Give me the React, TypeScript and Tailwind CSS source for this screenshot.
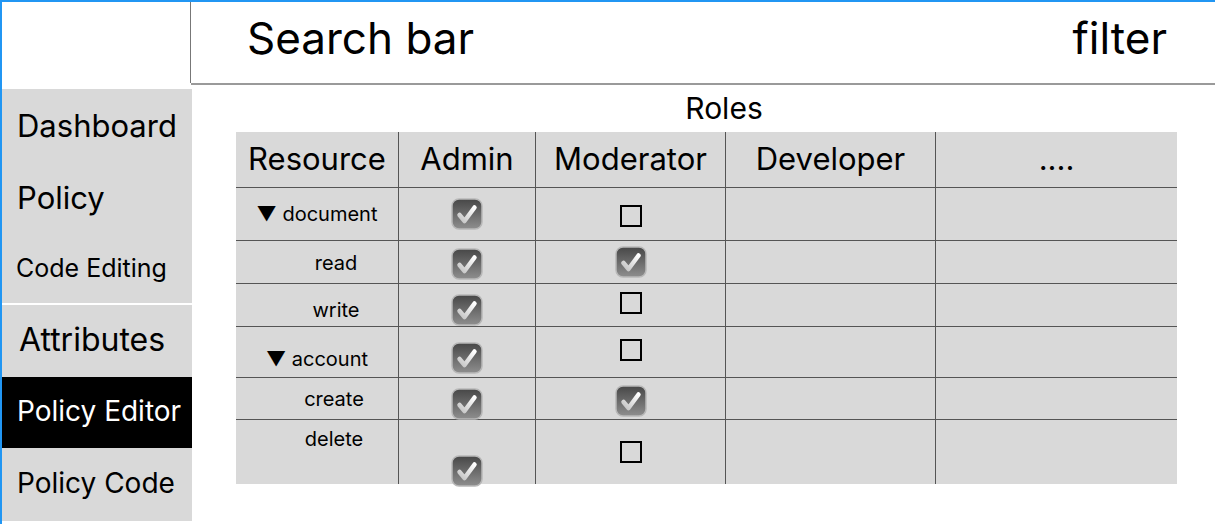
import React from 'react';

const CheckedBox = () => (
  <svg width="32" height="32" viewBox="0 0 32 32">
    <defs>
      <linearGradient id="cb-bg" x1="0" y1="0" x2="0" y2="1">
        <stop offset="0" stopColor="#474747" />
        <stop offset="1" stopColor="#8e8e8e" />
      </linearGradient>
      <linearGradient id="cb-tick" x1="1" y1="0" x2="0" y2="1">
        <stop offset="0" stopColor="#ffffff" />
        <stop offset="1" stopColor="#c4c4c4" />
      </linearGradient>
    </defs>
    <rect x="1" y="1" width="30" height="30" rx="7" fill="url(#cb-bg)" stroke="#b8b8b8" strokeWidth="1.5" />
    <path d="M8.5 17 L13.5 23 L23.5 9.5" fill="none" stroke="url(#cb-tick)" strokeWidth="4.5" strokeLinecap="round" strokeLinejoin="round" />
  </svg>
);

const EmptyBox = () => <div className="w-[22px] h-[22px] border-2 border-black"></div>;

const App = () => {
  // label / admin / moderator cells, with per-cell nudges to match the sketch
  const rows = [
    { h: 'h-[53px]', label: '▼ document', labelCls: 'items-center pt-0', adminCls: 'items-center pt-0', mod: 'empty', modCls: 'pt-[4px]' },
    { h: 'h-[43px]', label: 'read', labelCls: 'items-center pl-[38px] pt-[1px]', adminCls: 'items-center pt-[3px]', mod: 'checked', modCls: 'pb-[1px]' },
    { h: 'h-[43px]', label: 'write', labelCls: 'items-center pl-[38px] pt-[10px]', adminCls: 'items-center pt-[10px]', mod: 'empty', modCls: 'pb-[4px]' },
    { h: 'h-[51px]', label: '▼ account', labelCls: 'items-center pt-[14px]', adminCls: 'items-center pt-[12px]', mod: 'empty', modCls: 'pb-[4px]' },
    { h: 'h-[42px]', label: 'create', labelCls: 'items-center pl-[34px]', adminCls: 'items-center pt-[10px]', mod: 'checked', modCls: 'pt-[4px]' },
    { h: 'h-[65px]', label: 'delete', labelCls: 'items-center pl-[34px] pb-[26px]', adminCls: 'items-end', mod: 'empty', modCls: 'pt-0' },
  ];

  const headers = ['Resource', 'Admin', 'Moderator', 'Developer', '....'];

  return (
    <div className="w-full h-[524px] overflow-hidden bg-white border-t-2 border-l-2 border-[#2196f3] font-['Inter',sans-serif] text-black">
      <header className="flex">
        <div className="w-[189px] h-[81px] border-r border-[#777]"></div>
        <div className="flex-1 h-[83px] border-b-2 border-[#9a9a9a] flex items-center justify-between pl-[56px] pr-[48px] pb-[10px]">
          <span className="text-[44px]">Search bar</span>
          <span className="text-[44px]">filter</span>
        </div>
      </header>

      <div className="flex mt-[4px]">
        <aside className="w-[190px] flex flex-col">
          <div className="bg-[#d9d9d9] flex flex-col">
            <div className="h-[76px] flex items-center pl-[15px] pb-[2px] text-[31px]">Dashboard</div>
            <div className="h-[72px] flex items-center pl-[15px] pb-[6px] text-[31px]">Policy</div>
            <div className="h-[66px] flex items-center pl-[14px] pb-[2px] text-[25px]">Code Editing</div>
          </div>
          <div className="h-[72px] mt-[2px] bg-[#d9d9d9] flex items-center pl-[17px] pb-[2px] text-[32px]">Attributes</div>
          <div className="h-[71px] bg-black text-white flex items-center pl-[15px] pb-[4px] text-[28px]">Policy Editor</div>
          <div className="h-[73px] bg-[#d9d9d9] flex items-center pl-[15px] pb-[4px] text-[28px]">Policy Code</div>
        </aside>

        <main className="flex-1">
          <div className="h-[43px] flex items-center justify-center pl-[41px] pb-[4px] text-[30px]">Roles</div>
          <div className="ml-[44px] w-[941px] bg-[#d9d9d9]">
            <div className="grid grid-cols-[162px_137px_190px_210px_242px] h-[55px]">
              {headers.map((h, i) => (
                <div
                  key={h}
                  className={`flex items-center justify-center text-[31px] pb-[1px] ${i > 0 ? 'border-l border-[#555]' : ''}`}
                >
                  {h}
                </div>
              ))}
            </div>
            {rows.map((r) => (
              <div key={r.label} className={`grid grid-cols-[162px_137px_190px_210px_242px] border-t border-[#555] ${r.h}`}>
                <div className={`flex justify-center text-[20px] ${r.labelCls}`}>{r.label}</div>
                <div className={`flex justify-center border-l border-[#555] ${r.adminCls}`}>
                  <div className={r.label === 'delete' ? '-mb-[3px]' : ''}>
                    <CheckedBox />
                  </div>
                </div>
                <div className={`flex items-center justify-center border-l border-[#555] ${r.modCls}`}>
                  {r.mod === 'checked' ? <CheckedBox /> : <EmptyBox />}
                </div>
                <div className="border-l border-[#555]"></div>
                <div className="border-l border-[#555]"></div>
              </div>
            ))}
          </div>
        </main>
      </div>
    </div>
  );
};

export default App;
